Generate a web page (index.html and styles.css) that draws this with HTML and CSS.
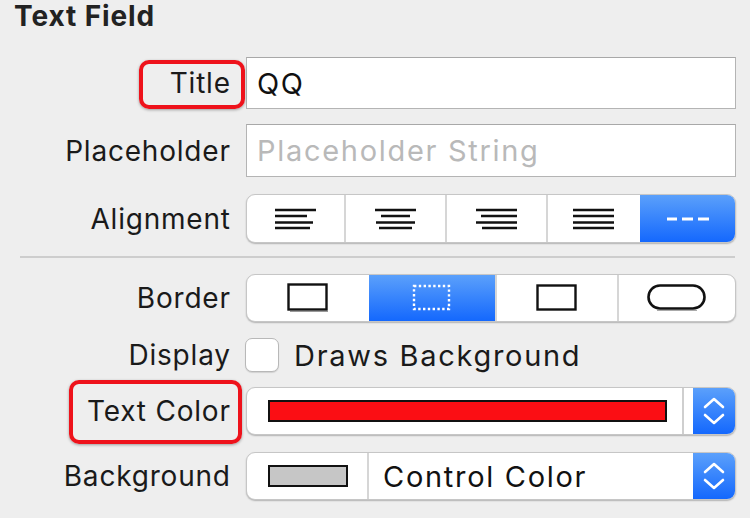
FILE: index.html
```html
<!DOCTYPE html>
<html>
<head>
<meta charset="utf-8">
<link rel="stylesheet" href="styles.css">
</head>
<body>
<div class="panel">
  <div class="heading">Text Field</div>

  <div class="row r-title">
    <div class="label"><span class="hl hl-title"></span>Title</div>
    <div class="field">QQ</div>
  </div>

  <div class="row r-placeholder">
    <div class="label">Placeholder</div>
    <div class="field placeholder">Placeholder String</div>
  </div>

  <div class="row r-align">
    <div class="label">Alignment</div>
    <div class="seg seg5">
      <div class="cell">
        <svg width="42" height="22" viewBox="0 0 42 22"><g stroke="#111" stroke-width="2.4"><line x1="0" y1="2" x2="41" y2="2"/><line x1="0" y1="8" x2="32" y2="8"/><line x1="0" y1="14.5" x2="38" y2="14.5"/><line x1="0" y1="20" x2="35" y2="20"/></g></svg>
      </div>
      <div class="cell">
        <svg width="42" height="22" viewBox="0 0 42 22"><g stroke="#111" stroke-width="2.4"><line x1="0" y1="2" x2="41" y2="2"/><line x1="6" y1="8" x2="35" y2="8"/><line x1="1" y1="14.5" x2="40" y2="14.5"/><line x1="4" y1="20" x2="37" y2="20"/></g></svg>
      </div>
      <div class="cell">
        <svg width="42" height="22" viewBox="0 0 42 22"><g stroke="#111" stroke-width="2.4"><line x1="0" y1="2" x2="41" y2="2"/><line x1="5" y1="8" x2="41" y2="8"/><line x1="0" y1="14.5" x2="41" y2="14.5"/><line x1="6" y1="20" x2="41" y2="20"/></g></svg>
      </div>
      <div class="cell">
        <svg width="42" height="22" viewBox="0 0 42 22"><g stroke="#111" stroke-width="2.4"><line x1="0" y1="2" x2="41" y2="2"/><line x1="0" y1="8" x2="41" y2="8"/><line x1="0" y1="14.5" x2="41" y2="14.5"/><line x1="0" y1="20" x2="41" y2="20"/></g></svg>
      </div>
      <div class="cell on">
        <svg width="42" height="6" viewBox="0 0 42 6"><g stroke="#fff" stroke-width="3"><line x1="0" y1="3" x2="10" y2="3"/><line x1="15" y1="3" x2="26" y2="3"/><line x1="31" y1="3" x2="42" y2="3"/></g></svg>
      </div>
    </div>
  </div>

  <div class="sep"></div>

  <div class="row r-border">
    <div class="label">Border</div>
    <div class="seg seg4">
      <div class="cell">
        <svg width="42" height="30" viewBox="0 0 42 30"><rect x="1.5" y="1.5" width="38" height="25" fill="none" stroke="#111" stroke-width="2.4"/><line x1="3" y1="28.5" x2="41" y2="28.5" stroke="#999" stroke-width="1.2"/></svg>
      </div>
      <div class="cell on">
        <svg width="40" height="28" viewBox="0 0 40 28"><rect x="2" y="2" width="35" height="23" fill="none" stroke="#fff" stroke-width="2.4" stroke-dasharray="2.4 2.4"/></svg>
      </div>
      <div class="cell">
        <svg width="42" height="28" viewBox="0 0 42 28"><rect x="1.5" y="1.5" width="38" height="24" fill="none" stroke="#111" stroke-width="2.4"/></svg>
      </div>
      <div class="cell">
        <svg width="60" height="28" viewBox="0 0 60 28"><rect x="1.5" y="1.5" width="56" height="23" rx="11.5" fill="none" stroke="#111" stroke-width="2.6"/><path d="M10 26.5 H50" stroke="#aaa" stroke-width="1"/></svg>
      </div>
    </div>
  </div>

  <div class="row r-display">
    <div class="label">Display</div>
    <div class="check-wrap">
      <span class="checkbox"></span>
      <span class="check-text">Draws Background</span>
    </div>
  </div>

  <div class="row r-textcolor">
    <div class="label"><span class="hl hl-color"></span>Text Color</div>
    <div class="popup">
      <div class="pop-main"><span class="swatch red"></span></div>
      <div class="pop-div"></div>
      <div class="stepper">
        <svg width="22" height="30" viewBox="0 0 22 30"><g fill="none" stroke="#fff" stroke-width="2.6" stroke-linecap="round" stroke-linejoin="round"><path d="M2 11 L11 3 L20 11"/><path d="M2 19 L11 27 L20 19"/></g></svg>
      </div>
    </div>
  </div>

  <div class="row r-bg">
    <div class="label">Background</div>
    <div class="popup">
      <div class="pop-swatch"><span class="swatch gray"></span></div>
      <div class="pop-div2"></div>
      <div class="pop-text">Control Color</div>
      <div class="stepper">
        <svg width="22" height="30" viewBox="0 0 22 30"><g fill="none" stroke="#fff" stroke-width="2.6" stroke-linecap="round" stroke-linejoin="round"><path d="M2 11 L11 3 L20 11"/><path d="M2 19 L11 27 L20 19"/></g></svg>
      </div>
    </div>
  </div>
</div>
</body>
</html>
```

FILE: styles.css
```css
html, body {
  margin: 0;
  padding: 0;
  background: #eeeeee;
}
body {
  width: 750px;
  height: 518px;
  overflow: hidden;
  font-family: "Inter", "Liberation Sans", sans-serif;
  color: #1a1a1a;
}
.panel {
  width: 750px;
}
.heading {
  height: 57px;
  box-sizing: border-box;
  padding-left: 14px;
  padding-top: 0px;
  font-size: 28px;
  font-weight: 700;
  letter-spacing: 0.9px;
  line-height: 32px;
  color: #222;
}
.row {
  display: grid;
  grid-template-columns: 230px 490px;
  column-gap: 16px;
  align-items: center;
}
.label {
  position: relative;
  text-align: right;
  font-size: 28px;
  letter-spacing: 0.8px;
  line-height: 32px;
  white-space: nowrap;
  margin-right: -0.8px;
}
.hl {
  position: absolute;
  border: 4px solid #ee121b;
  border-radius: 10px;
  box-shadow: 0 1px 3px rgba(0,0,0,0.35);
  box-sizing: border-box;
}
.hl-title {
  left: 139px;
  top: -7px;
  width: 106px;
  height: 49px;
}
.hl-color {
  left: 69px;
  top: -15px;
  width: 173px;
  height: 64px;
}
.r-title { height: 52px; }
.r-placeholder { height: 53px; margin-top: 15px; }
.r-align { height: 49px; margin-top: 17px; }
.r-border { height: 48px; margin-top: 0; }
.r-display { height: 38px; margin-top: 14px; }
.r-textcolor { height: 48px; margin-top: 13px; }
.r-bg { height: 48px; margin-top: 17px; }

.field {
  height: 100%;
  box-sizing: border-box;
  background: #fff;
  border: 1px solid #b4b4b4;
  border-top-color: #a8a8a8;
  padding-left: 10px;
  font-size: 29px;
  letter-spacing: 1.7px;
  display: flex;
  align-items: center;
  color: #111;
}
.placeholder {
  color: #b9b9b9;
}
.sep {
  height: 2px;
  background: #cdcdcd;
  margin: 13px 15px 16px 20px;
}
.seg {
  height: 100%;
  box-sizing: border-box;
  display: grid;
  background: #fff;
  border: 1px solid #c6c6c6;
  border-radius: 9px;
  box-shadow: 0 1px 1.5px rgba(0,0,0,0.25);
  overflow: hidden;
}
.seg5 { grid-template-columns: 97px 101px 101px 94px 1fr; }
.seg4 { grid-template-columns: 122px 126px 122px 1fr; }
.cell {
  display: flex;
  align-items: center;
  justify-content: center;
  border-left: 2px solid #d6d6d6;
}
.cell:first-child { border-left: none; }
.cell.on {
  border-left: none;
  background: linear-gradient(#5ba0fb, #1468fd);
}
.check-wrap {
  display: flex;
  align-items: center;
  margin-left: -1px;
}
.checkbox {
  width: 34px;
  height: 34px;
  box-sizing: border-box;
  background: #fff;
  border: 1px solid #b8b8b8;
  border-radius: 7px;
  box-shadow: 0 1px 1px rgba(0,0,0,0.12);
}
.check-text {
  margin-left: 15px;
  font-size: 29px;
  letter-spacing: 1.7px;
}
.popup {
  height: 100%;
  box-sizing: border-box;
  display: flex;
  background: #fff;
  border: 1px solid #c6c6c6;
  border-radius: 9px;
  box-shadow: 0 1px 1.5px rgba(0,0,0,0.25);
  overflow: hidden;
}
.pop-main {
  flex: 1;
  display: flex;
  align-items: center;
  padding-left: 21px;
}
.swatch {
  display: block;
  box-sizing: border-box;
  border: 2px solid #111;
  height: 22px;
}
.swatch.red {
  width: 399px;
  background: #fb0e14;
}
.swatch.gray {
  width: 80px;
  background: #c6c6c6;
}
.pop-div {
  width: 2px;
  background: #cfcfcf;
  margin-right: 9px;
}
.pop-swatch {
  width: 120px;
  display: flex;
  align-items: center;
  padding-left: 21px;
  box-sizing: border-box;
}
.pop-div2 {
  width: 2px;
  background: #d6d6d6;
}
.pop-text {
  flex: 1;
  display: flex;
  align-items: center;
  padding-left: 14px;
  font-size: 29px;
  letter-spacing: 1.7px;
  color: #111;
}
.stepper {
  width: 42px;
  display: flex;
  align-items: center;
  justify-content: center;
  background: linear-gradient(#5ba0fb, #1468fd);
}
```
